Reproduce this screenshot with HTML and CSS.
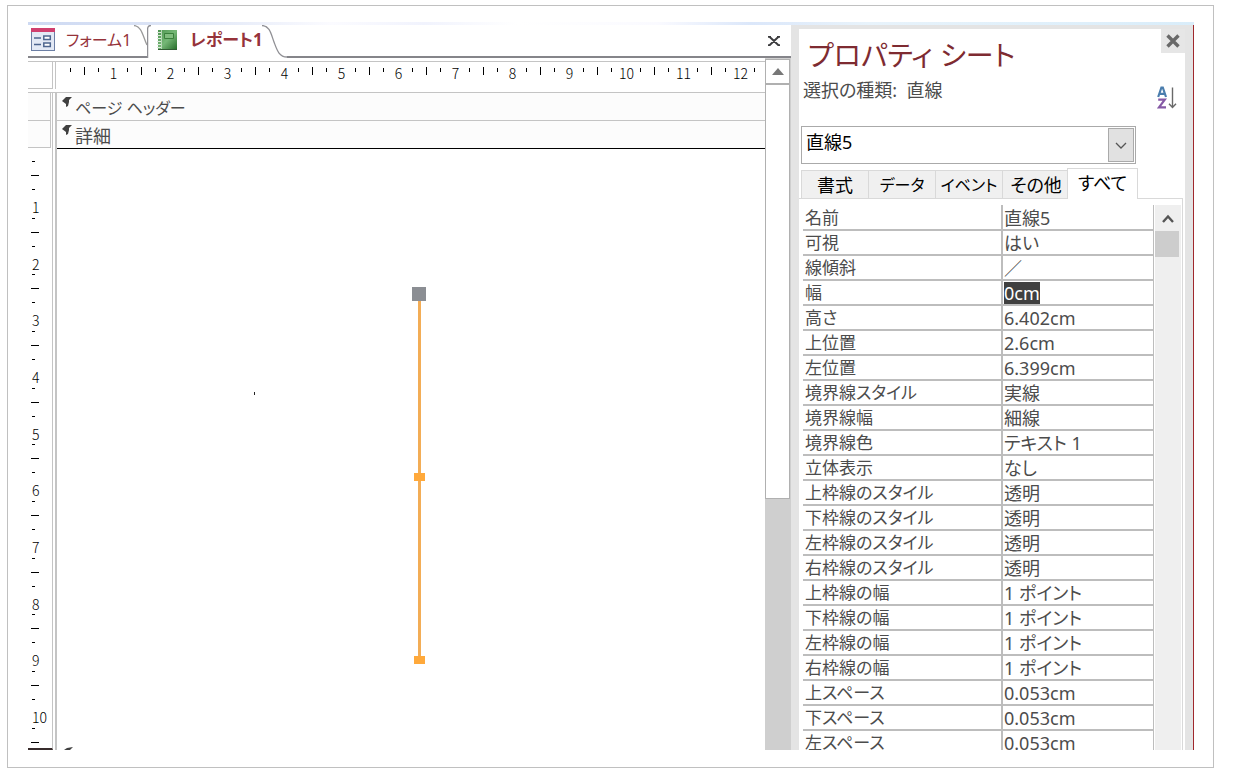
FILE: index.html
```html
<!DOCTYPE html>
<html lang="ja">
<head>
<meta charset="utf-8">
<title>レポート1</title>
<link rel="stylesheet" href="styles.css">
</head>
<body>
<div class="frame">
  <div class="strip"></div>
  <div class="app">
    <main class="designer">
      <nav class="doc-tabs">
        <button class="doc-tab form-tab" type="button">
          <svg class="tab-shape" width="119" height="33" viewBox="0 0 119 33"><path d="M0 32H119" fill="none" stroke="#85858a" stroke-width="2"/><path d="M106 0.500C114 1 115 12 119 20" fill="none" stroke="#999" stroke-width="1.300"/></svg>
          <svg class="icon" width="24" height="23" viewBox="0 0 24 23"><rect x=".5" y=".5" width="23" height="22" fill="#e3e9f5" stroke="#6c7fa5"/><rect width="24" height="4" fill="#d0406f"/><path d="M3 10h7M3 16.500h7" stroke="#4d658f" stroke-width="1.500"/><path d="M12.800 8h6.500v3.500h-6.500zM12.800 15h6.500v3.500h-6.500z" fill="#fff" stroke="#4d658f" stroke-width="1.500"/></svg>
          <span>フォーム1</span>
        </button>
        <button class="doc-tab report-tab" type="button">
          <svg class="tab-shape" width="140" height="33" viewBox="0 0 140 33"><path d="M.6 33V4Q.6 .5 4 .5M115 .5C123 1 124 9 127 17S132 32 140 32" fill="none" stroke="#909095" stroke-width="1.300"/></svg>
          <svg class="icon" width="20" height="20" viewBox="0 0 20 20"><defs><linearGradient id="book" x2="1" y2="1"><stop stop-color="#4e9550"/><stop offset=".5" stop-color="#75b776"/><stop offset="1" stop-color="#246b28"/></linearGradient></defs><path d="M1 0h19v20H1z" fill="url(#book)"/><path d="M4.500 0v19" stroke="#b7d8b6"/><path d="M0 2.500h4M0 5.500h4M0 8.500h4M0 11.500h4M0 14.500h4M0 17.500h4" stroke="#dce8dc"/><path d="M7.500 3.500h9v5h-9z" fill="#80bc7e" stroke="#397f3b"/><path d="M1 19.500h19" stroke="#315c33"/></svg>
          <span>レポート1</span>
        </button>
        <div class="tab-rest">
          <button class="doc-close" type="button" aria-label="閉じる"><svg width="12" height="10" viewBox="0 0 12 10"><path d="M0 .7h3M9 .7h3M0 9.300h3M9 9.300h3M1.500 .7l9 8.600M10.500 .7l-9 8.600" fill="none" stroke="#3c3c3e" stroke-width="1.900"/></svg></button>
        </div>
      </nav>
      <div class="work">
        <div class="surface">
          <div class="ruler-row">
            <div class="corner"></div>
            <ol class="ruler-x"><li>1</li><li>2</li><li>3</li><li>4</li><li>5</li><li>6</li><li>7</li><li>8</li><li>9</li><li>10</li><li>11</li><li>12</li><li></li></ol>
          </div>
          <div class="body-row">
            <div class="gutter">
              <div class="selector"></div>
              <div class="selector"></div>
              <ol class="ruler-y"><li>1</li><li>2</li><li>3</li><li>4</li><li>5</li><li>6</li><li>7</li><li>8</li><li>9</li><li>10</li><li></li></ol>
            </div>
            <div class="sections">
              <div class="section-bar"><svg width="10" height="10" viewBox="0 0 10 10"><path d="M0 4L4 0h6L7 3v2L6 9 4 10V7z" fill="#404040"/></svg><span class="kana">ページ ヘッダー</span></div>
              <div class="section-bar detail-bar"><svg width="10" height="10" viewBox="0 0 10 10"><path d="M0 4L4 0h6L7 3v2L6 9 4 10V7z" fill="#404040"/></svg><span>詳細</span></div>
              <div class="canvas">
                <span class="speck"></span>
                <div class="line-shape"><i class="anchor"></i><i class="handle middle"></i><i class="handle end"></i></div>
                <svg class="footer-mark" width="10" height="3" viewBox="0 0 10 3"><path d="M0 3L3 1l6-1-3 3z" fill="#404040"/></svg>
              </div>
            </div>
          </div>
        </div>
        <div class="scroll">
          <button class="scroll-up" type="button" aria-label="上へ"><svg width="12" height="7" viewBox="0 0 12 7"><path d="M0 7L6 0l6 7z" fill="#777"/></svg></button>
          <div class="scroll-thumb"></div>
        </div>
      </div>
    </main>
    <aside class="panel">
      <div class="sheet">
        <header class="sheet-head">
          <div class="sheet-titles">
            <h1>プロパティ シート</h1>
            <p>選択の種類:&nbsp; 直線</p>
          </div>
          <div class="sheet-tools">
            <button class="sheet-close" type="button" aria-label="閉じる"><svg width="14" height="14" viewBox="0 0 14 14"><path d="M1.500 1.500l11 11M12.500 1.500l-11 11" stroke="#696969" stroke-width="3.400"/></svg></button>
            <button class="sort" type="button" aria-label="並べ替え"><svg width="20" height="23" viewBox="0 0 20 23"><path d="M1.200 11L4.400 1.500h1.400L9 11M2.500 7.800h5" fill="none" stroke="#4a7dad" stroke-width="2.200"/><path d="M1.200 13.600h6.600L2 21.300h7" fill="none" stroke="#8559a5" stroke-width="2.200"/><path d="M15.500 1.500v20M12 17.800l3.500 3.700 3.500-3.700" fill="none" stroke="#696969" stroke-width="1.400"/></svg></button>
          </div>
        </header>
        <div class="combo">
          <select aria-label="オブジェクト"><option>直線5</option></select>
          <span class="combo-arrow"><svg width="12" height="7" viewBox="0 0 12 7"><path d="M1 1l5 5 5-5" fill="none" stroke="#555" stroke-width="1.300"/></svg></span>
        </div>
        <div class="tabs" role="tablist">
          <button type="button" role="tab">書式</button><button type="button" role="tab" class="kana">データ</button><button type="button" role="tab" class="kana">イベント</button><button type="button" role="tab">その他</button><button type="button" role="tab" class="active" aria-selected="true">すべて</button>
        </div>
        <div class="page">
          <table>
            <tbody>
              <tr><th scope="row">名前</th><td>直線5</td></tr>
              <tr><th scope="row">可視</th><td>はい</td></tr>
              <tr><th scope="row">線傾斜</th><td>／</td></tr>
              <tr><th scope="row">幅</th><td><mark>0cm</mark></td></tr>
              <tr><th scope="row">高さ</th><td>6.402cm</td></tr>
              <tr><th scope="row">上位置</th><td>2.6cm</td></tr>
              <tr><th scope="row">左位置</th><td>6.399cm</td></tr>
              <tr><th scope="row">境界線スタイル</th><td>実線</td></tr>
              <tr><th scope="row">境界線幅</th><td>細線</td></tr>
              <tr><th scope="row">境界線色</th><td>テキスト 1</td></tr>
              <tr><th scope="row">立体表示</th><td>なし</td></tr>
              <tr><th scope="row">上枠線のスタイル</th><td>透明</td></tr>
              <tr><th scope="row">下枠線のスタイル</th><td>透明</td></tr>
              <tr><th scope="row">左枠線のスタイル</th><td>透明</td></tr>
              <tr><th scope="row">右枠線のスタイル</th><td>透明</td></tr>
              <tr><th scope="row">上枠線の幅</th><td>1 ポイント</td></tr>
              <tr><th scope="row">下枠線の幅</th><td>1 ポイント</td></tr>
              <tr><th scope="row">左枠線の幅</th><td>1 ポイント</td></tr>
              <tr><th scope="row">右枠線の幅</th><td>1 ポイント</td></tr>
              <tr><th scope="row">上スペース</th><td>0.053cm</td></tr>
              <tr><th scope="row">下スペース</th><td>0.053cm</td></tr>
              <tr><th scope="row">左スペース</th><td>0.053cm</td></tr>
            </tbody>
          </table>
          <div class="page-scroll">
            <button type="button" aria-label="上へ"><svg width="12" height="9" viewBox="0 0 12 9"><path d="M1 8l5-5.500L11 8" fill="none" stroke="#555" stroke-width="2.400"/></svg></button>
            <div class="page-thumb"></div>
          </div>
        </div>
      </div>
    </aside>
  </div>
</div>
</body>
</html>
```
FILE: styles.css
```css
* { box-sizing: border-box; }

body {
  margin: 0;
  height: 100vh;
  padding: 5px 20px 12px 7px;
  background: #fff;
  color: #4c4c4c;
  font: 400 18px/24px "Noto Sans", "Noto Sans CJK JP", sans-serif;
  font-feature-settings: "palt";
}

button, select { font: inherit; font-feature-settings: inherit; color: inherit; }
button { margin: 0; padding: 0; border: 0; background: none; }
svg { display: block; flex: none; }
.kana { font-size: 16px; }

.frame {
  height: 100%;
  padding: 16px 19px 17px 20px;
  border: 1px solid #c0c0c0;
  display: flex;
  flex-direction: column;
}

.strip {
  flex: none;
  height: 3px;
  background: linear-gradient(90deg, #cdd9f2 0, #dfe6f6 14%, #fbfbff 26%, #f1f3fd 34%, #fff 42%, #fafaff 54%, #dbe7fa 62%, #e8f3fb 72%, #d9edfa 100%);
}

.app { flex: 1; min-height: 0; display: flex; }

/* Report designer */
.designer { flex: 1; min-width: 0; display: flex; flex-direction: column; }

.doc-tabs { flex: none; height: 33px; display: flex; }
.doc-tab {
  position: relative;
  display: flex;
  align-items: center;
  color: #96333a;
  font-size: 17px;
  white-space: nowrap;
}
.tab-shape { position: absolute; inset: 0; }
.form-tab { width: 119px; padding: 0 0 4px 3px; gap: 11px; font-size: 16px; }
.report-tab { width: 140px; padding: 0 0 4px 10px; gap: 13px; font-weight: 700; }
.tab-rest {
  flex: 1;
  border-bottom: 2px solid #85858a;
  display: flex;
  justify-content: flex-end;
  align-items: center;
  padding-right: 11px;
}

.work { flex: 1; min-height: 0; display: flex; }
.surface { flex: 1; min-width: 0; display: flex; flex-direction: column; padding-top: 3px; }

.ruler-row { flex: none; height: 31px; display: flex; gap: 2px; border-top: 1px solid #c4c4c4; }
.corner { flex: none; width: 25px; height: 27px; border: solid #c4c4c4; border-width: 0 1px 1px 0; }

.ruler-x, .ruler-y {
  list-style: none;
  margin: 0;
  color: #000;
  font: 300 14px/14px "Noto Sans CJK JP", sans-serif;
  overflow: hidden;
}
.ruler-x {
  flex: 1;
  height: 27px;
  padding: 4px 0 0 7px;
  border-left: 1px solid #c4c4c4;
  display: flex;
}
.ruler-x li {
  flex: none;
  width: 57px;
  height: 20px;
  padding-left: 44px;
  display: flex;
  justify-content: center;
  background:
    linear-gradient(#000, #000) 7px 2px / 1px 4px no-repeat,
    linear-gradient(#000, #000) 21px 1px / 1px 8px no-repeat,
    linear-gradient(#000, #000) 35px 2px / 1px 4px no-repeat;
}

.body-row { flex: 1; min-height: 0; display: flex; border-top: 1px solid #c4c4c4; overflow: hidden; }
.gutter {
  flex: none;
  width: 25px;
  display: flex;
  flex-direction: column;
  border-right: 1px solid #c4c4c4;
  border-bottom: 2px solid #382c2c;
}
.selector { flex: none; width: 23px; height: 28px; background: #fcfcfc; border: solid #c4c4c4; border-width: 0 1px 1px 0; }
.selector + .selector { height: 27px; }
.ruler-y { flex: 1; min-height: 0; padding: 6px 0 0; }
.ruler-y li {
  height: 57px;
  padding: 46px 0 0 4px;
  background:
    linear-gradient(#000, #000) 4px 7px / 3px 1px no-repeat,
    linear-gradient(#000, #000) 3px 21px / 8px 1px no-repeat,
    linear-gradient(#000, #000) 4px 35px / 3px 1px no-repeat;
}
.ruler-y li:nth-child(3n + 2) { height: 56px; }

.sections {
  flex: 1;
  min-width: 0;
  margin-left: 2px;
  border-left: 2px solid #c4c4c4;
  display: flex;
  flex-direction: column;
}
.section-bar {
  flex: none;
  height: 28px;
  display: flex;
  gap: 3px;
  padding: 4px 5px 0;
  line-height: 20px;
  background: #fcfcfc;
  border-bottom: 1px solid #c4c4c4;
}
.section-bar span { padding-top: 1px; }
.detail-bar { border-bottom-color: #000; }
.canvas { flex: 1; min-height: 0; position: relative; }

.speck { position: absolute; left: 197px; top: 243px; width: 1px; height: 3px; background: #222; }
.line-shape { position: absolute; left: 361px; top: 138px; width: 3px; height: 373px; background: #f3ad56; }
.anchor { position: absolute; left: -6px; top: 0; width: 14px; height: 14px; background: #8b8e93; }
.handle { position: absolute; left: -4px; width: 11px; height: 8px; background: #ffa93b; }
.middle { top: 186px; }
.end { bottom: -4px; }
.footer-mark { position: absolute; left: 7px; bottom: 0; }

.scroll { flex: none; width: 26px; padding-top: 1px; background: #cfcfcf; border-right: 1px solid #cfcfcf; }
.scroll-up {
  width: 25px;
  height: 25px;
  display: grid;
  place-items: center;
  background: #fff;
  border: 1px solid #b0b0b0;
}
.scroll-thumb { height: 60%; width: 25px; background: #fff; border: 1px solid #b0b0b0; }

/* Property sheet */
.panel {
  flex: none;
  width: 403px;
  padding: 4px 8px 0 8px;
  background: #e4e4e4;
  border-right: 1px solid #a0282c;
  display: flex;
}
.sheet { flex: 1; min-width: 0; background: #fff; display: flex; flex-direction: column; }

.sheet-head { flex: none; height: 97px; display: flex; justify-content: space-between; padding-left: 4px; }
.sheet-titles { padding-top: 8px; }
h1 { margin: 0 0 0 5px; font-size: 28px; line-height: 36px; font-weight: 400; color: #7e2b31; }
p { margin: 5px 0 0; }
.sheet-tools { display: flex; flex-direction: column; align-items: flex-end; gap: 33px; }
.sheet-close { width: 24px; height: 24px; display: grid; place-items: center; background: #e6e6e6; }
.sort { margin-right: 8px; }

.combo {
  flex: none;
  height: 38px;
  margin: 0 49px 4px 2px;
  padding: 1px;
  border: 1px solid #aaa;
  display: flex;
}
.combo select {
  flex: 1;
  min-width: 0;
  appearance: none;
  border: 0;
  padding: 0 3px 6px;
  background: #fff;
  color: #000;
}
.combo-arrow { width: 26px; display: grid; place-items: center; border: 1px solid #aaa; background: #e1e1e1; }

.tabs { flex: none; height: 30px; display: flex; align-items: flex-end; padding-left: 2px; }
.tabs button {
  width: 67px;
  height: 28px;
  background: #f0f0f0;
  color: #000;
  border: solid #d9d9d9;
  border-width: 1px 0 0 1px;
  white-space: nowrap;
}
.tabs .active {
  width: 71px;
  height: 31px;
  margin: 0 0 -1px -2px;
  padding-bottom: 3px;
  background: #fff;
  border-right-width: 1px;
  position: relative;
}

.page {
  flex: 1;
  min-height: 0;
  margin-right: 2px;
  padding: 6px 1px 0 4px;
  border: solid #d9d9d9;
  border-width: 1px 1px 0 0;
  display: flex;
  align-items: flex-start;
  overflow: hidden;
}
table { flex: 1; border-collapse: separate; border-spacing: 0; table-layout: fixed; border-right: 1px solid #bdbdbd; }
th, td {
  height: 25px;
  padding: 1px 2px 0;
  border-bottom: 2px solid #bdbdbd;
  font-weight: 400;
  line-height: 22px;
  text-align: left;
  white-space: nowrap;
}
th { width: 198px; font-size: 17px; }
td { border-left: 2px solid #bdbdbd; padding-left: 1px; }
tr:first-child > * { height: 26px; }
mark { display: inline-block; background: #404040; color: #fff; }

.page-scroll { flex: none; align-self: stretch; width: 26px; margin-left: 1px; background: #efefef; }
.page-scroll button { width: 25px; height: 26px; display: grid; place-items: center; }
.page-thumb { width: 24px; height: 26px; background: #cdcdcd; }
```
